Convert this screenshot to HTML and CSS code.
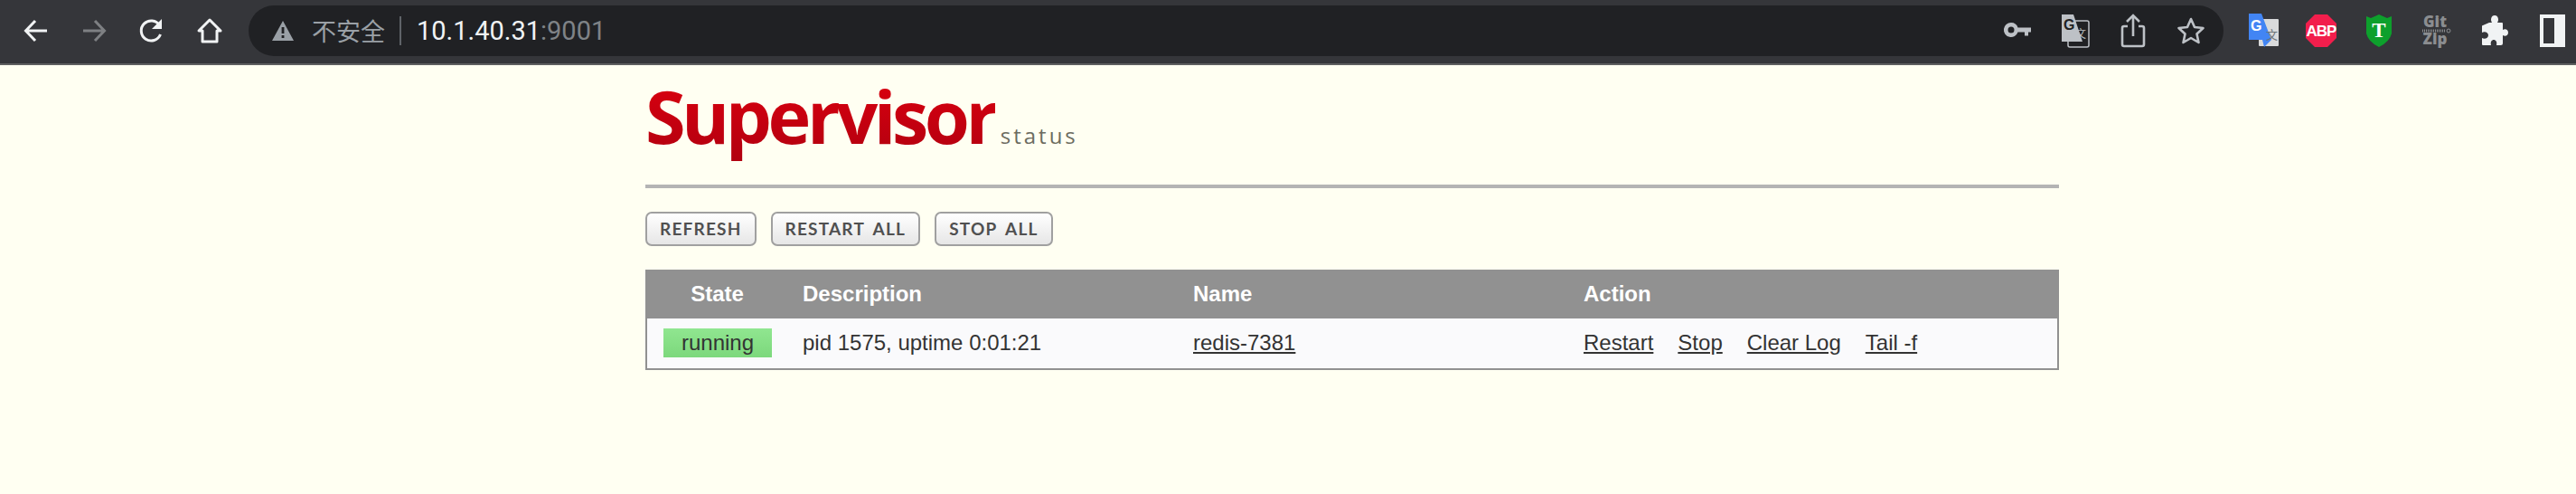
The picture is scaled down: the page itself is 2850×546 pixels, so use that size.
FILE: index.html
```html
<!DOCTYPE html>
<html lang="zh">
<head>
<meta charset="utf-8">
<title>Supervisor Status</title>
<link rel="stylesheet" href="styles.css">
</head>
<body>
<header class="toolbar">
  <nav class="nav">
    <span class="tb"><svg width="32" height="32" viewBox="0 0 32 32" class="ln"><path d="M28 16H5M15 5 4.500 16 15 27"/></svg></span>
    <span class="tb"><svg width="32" height="32" viewBox="0 0 32 32" class="ln dim"><path d="M4 16h23M17 5l10.500 11L17 27"/></svg></span>
    <span class="tb"><svg width="32" height="32" viewBox="0 0 32 32" class="ln"><path d="M25.500 20a11 11 0 1 1-1-10"/><path class="fl" d="M27 3v11H16z"/></svg></span>
    <span class="tb"><svg width="32" height="32" viewBox="0 0 32 32" class="ln"><path d="M16 4 4 16h4v12h16V16h4z" stroke-linejoin="round"/></svg></span>
  </nav>
  <div class="omni">
    <svg class="warn" width="26" height="26" viewBox="0 0 26 26"><path class="warn-t" d="M13 2 25 24H1z"/><path class="warn-m" d="M11.600 9h2.800v7h-2.800zM11.600 18h2.800v3h-2.800z"/></svg>
    <span class="insecure">不安全</span>
    <span class="sep"></span>
    <span class="url">10.1.40.31<span class="port">:9001</span></span>
    <span class="omni-icons">
      <span class="tb"><svg width="32" height="32" viewBox="0 0 32 32"><path class="gr" fill-rule="evenodd" d="M9 7a8 8 0 0 1 7.500 5.500H31v5h-3v4h-4v-4h-7.500A8 8 0 1 1 9 7zm0 4.500a3.500 3.500 0 1 0 0 7 3.500 3.500 0 0 0 0-7z"/></svg></span>
      <span class="tb"><svg width="32" height="38" viewBox="0 0 32 38"><rect class="ol" x="8" y="8" width="23" height="29" rx="2"/><path class="gr" d="M1 1h13l10 30H1z"/><text x="3" y="18" class="tg">G</text><text x="16" y="27" class="tz">文</text></svg></span>
      <span class="tb"><svg width="28" height="38" viewBox="0 0 28 38" class="ol2"><path d="M8 14H4a2 2 0 0 0-2 2v18a2 2 0 0 0 2 2h20a2 2 0 0 0 2-2V16a2 2 0 0 0-2-2h-4M14 25V3M7 9l7-7 7 7"/></svg></span>
      <span class="tb"><svg width="34" height="34" viewBox="0 0 34 34" class="ol2"><path d="m17 4 4 9 9.500 1-7 6.500 2 9.500-8.500-5-8.500 5 2-9.500-7-6.500 9.500-1z" stroke-linejoin="round"/></svg></span>
    </span>
  </div>
  <div class="exts">
    <span class="tb"><svg width="34" height="38" viewBox="0 0 34 38"><rect class="gt-b" x="12" y="6" width="22" height="30" rx="1"/><path class="gt-a" d="M1 0h14l11 29-8 8-2-8H1z"/><text x="3" y="19" class="gt-g">G</text><text x="20" y="28" class="gt-z">文</text></svg></span>
    <span class="tb"><svg width="34" height="36" viewBox="0 0 34 36"><path class="abp" d="M10 0h14l10 10v16L24 36H10L0 26V10z"/><text x="17" y="24" class="abp-t">ABP</text></svg></span>
    <span class="tb"><svg width="30" height="38" viewBox="0 0 30 38"><path class="ts" d="M1 3l5 2 9-4 9 4 5-2v19q-2 9-14 15Q3 31 1 22z"/><text x="15" y="26" class="ts-t">T</text></svg></span>
    <span class="tb"><svg width="34" height="46" viewBox="0 0 34 46"><text x="15" y="19" class="gz">Git</text><path class="gz-l" d="M1 23h26"/><circle class="gz-c" cx="30" cy="23" r="2"/><text x="15" y="38" class="gz">Zip</text></svg></span>
    <span class="tb"><svg width="30" height="36" viewBox="0 0 30 36"><path class="pz" d="M9 9h3c-2-3-1-8 3-8s5 5 3 8h5a1 1 0 0 1 1 1v7c3-2 6 0 6 3s-3 5-6 3v9a2 2 0 0 1-2 2h-5c1-4-1-6-3-6s-4 2-3 6H2a1 1 0 0 1-1-1v-7c3 2 7 0 7-3s-4-5-7-3v-7a1 1 0 0 1 1-1z"/></svg></span>
    <span class="tb"><svg width="28" height="36" viewBox="0 0 28 36"><path class="pz" fill-rule="evenodd" d="M0 0h28v36H0zM4 4v28h12V4z"/></svg></span>
  </div>
</header>
<main class="page">
  <div class="brand">
    <span class="logo">Supervisor</span>
    <span class="sub">status</span>
  </div>
  <hr class="rule">
  <ul class="actions">
    <li class="btn">Refresh</li>
    <li class="btn">Restart All</li>
    <li class="btn">Stop All</li>
  </ul>
  <table class="procs">
    <thead>
      <tr><th class="c-state">State</th><th class="c-desc">Description</th><th class="c-name">Name</th><th>Action</th></tr>
    </thead>
    <tbody>
      <tr>
        <td class="c-state"><span class="pill">running</span></td>
        <td class="c-desc">pid 1575, uptime 0:01:21</td>
        <td class="c-name"><a href="#">redis-7381</a></td>
        <td class="acts"><a href="#">Restart</a><a href="#">Stop</a><a href="#">Clear Log</a><a href="#">Tail -f</a></td>
      </tr>
    </tbody>
  </table>
</main>
</body>
</html>
```
FILE: styles.css
```css
* { box-sizing: border-box; }
html, body { margin: 0; height: 100%; }
body { background: #fffff2; font-family: "Liberation Sans", Arial, sans-serif; color: #333; overflow: hidden; }

.toolbar { height: 72px; background: #35363a; border-bottom: 2px solid #5e5f60; display: flex; align-items: center; padding: 0 0 2px 8px; }
.nav, .exts, .omni-icons { display: flex; align-items: center; }
.tb { width: 64px; height: 56px; display: flex; align-items: center; justify-content: center; flex: none; }
.ln path { fill: none; stroke: #f1f3f4; stroke-width: 3; }
.ln .fl { fill: #f1f3f4; stroke: none; }
.ln.dim path { stroke: #7e8083; }

.omni { width: 2185px; height: 56px; margin-left: 11px; background: #202124; border-radius: 28px; display: flex; align-items: center; padding-left: 25px; flex: none; }
.warn { flex: none; }
.warn-t { fill: #9aa0a6; }
.warn-m { fill: #202124; }
.insecure { margin-left: 19px; font: 27px "Noto Sans CJK SC", sans-serif; color: #9aa0a6; line-height: 56px; }
.sep { width: 2px; height: 32px; background: #5f6368; margin: 0 16px; }
.url { font: 29px Roboto, sans-serif; color: #f1f3f4; margin-left: 1px; }
.port { color: #7f8387; }
.omni-icons { margin-left: auto; margin-right: 4px; }
.gr { fill: #bdc1c6; }
.ol { fill: #202124; stroke: #bdc1c6; stroke-width: 1.500; }
.tg { font: bold 16px "Liberation Sans", sans-serif; fill: #202124; }
.tz { font: 12px "Noto Sans CJK SC", sans-serif; fill: #bdc1c6; }
.ol2 path { fill: none; stroke: #bdc1c6; stroke-width: 2.600; }

.exts { margin-left: 12px; }
.gt-a { fill: #4285f4; }
.gt-b { fill: #d9dadb; }
.gt-g { font: bold 16px "Liberation Sans", sans-serif; fill: #fff; }
.gt-z { font: 13px "Noto Sans CJK SC", sans-serif; fill: #6d7478; }
.abp { fill: #f21e4c; }
.abp-t { font: bold 17px "Liberation Sans", sans-serif; letter-spacing: -1px; fill: #fff; text-anchor: middle; }
.ts { fill: #0da02c; }
.ts-t { font: bold 23px "Liberation Serif", serif; fill: #fff; text-anchor: middle; }
.gz { font: 800 17px "Open Sans", sans-serif; fill: #8b8d90; text-anchor: middle; }
.gz-l { stroke: #8b8d90; stroke-width: 3; stroke-dasharray: 1 1; }
.gz-c { fill: none; stroke: #8b8d90; stroke-width: 1; }
.pz { fill: #f1f3f4; }

.page { padding: 20px 0 0 714px; width: 2278px; }
.brand { display: flex; align-items: baseline; height: 112px; }
.logo { font: 700 81px/72px "Open Sans", sans-serif; letter-spacing: -4.500px; padding-bottom: 20px; background: linear-gradient(#d8000f, #ae0010); -webkit-background-clip: text; background-clip: text; color: transparent; }
.sub { font: 24px "Open Sans", sans-serif; letter-spacing: 3px; color: #6c6c60; margin-left: 6px; }
.rule { height: 4px; margin: 0; border: 0; background: #b4b4b4; }

.actions { display: flex; gap: 16px; list-style: none; margin: 26px 0 0; padding: 0; }
.btn { height: 38px; padding: 0 14px 2px; display: flex; align-items: center; border: 2px solid #a0a0a0; border-radius: 7px; background: linear-gradient(#fff, #e6e6e6); font: 700 19px Lato, sans-serif; letter-spacing: 1.200px; word-spacing: 4px; text-transform: uppercase; color: #505050; }

.procs { width: 1564px; margin-top: 26px; border-collapse: separate; border-spacing: 0; border: 2px solid #919191; border-top: 0; table-layout: fixed; background: #fafafc; font-size: 24px; }
.procs th { height: 54px; background: #919191; color: #fff; text-align: left; font-size: 24px; padding: 0; }
.procs td { height: 55px; padding: 0 0 2px; }
.procs .c-state { width: 172px; text-align: center; padding-right: 17px; }
.procs .c-desc { width: 432px; }
.procs .c-name { width: 432px; }
.pill { display: block; width: 120px; height: 32px; line-height: 32px; margin-left: 18px; background: linear-gradient(#90e690, #7cd87c); }
a { color: inherit; }
.acts a { margin-right: 27px; }
```
